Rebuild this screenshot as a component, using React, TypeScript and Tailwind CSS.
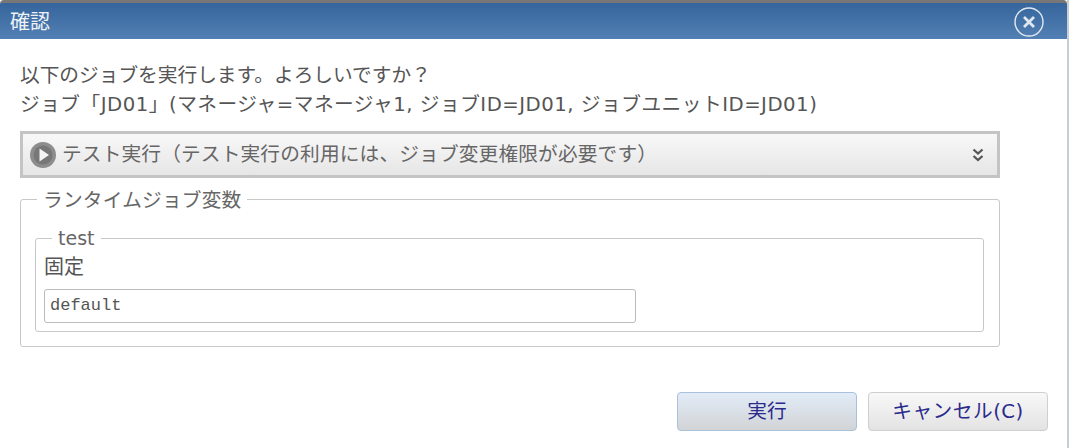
import React from "react";

export default function App() {
  return (
    <div className="w-[1069px] h-[448px] bg-white overflow-hidden font-['DejaVu_Sans','Noto_Sans_CJK_JP',sans-serif] text-[#555] border-r-2 border-[#c9ced3] flex flex-col">
      <div className="h-[39px] shrink-0 border-t-[3px] border-[#777] rounded-t-[4px] bg-gradient-to-b from-[#35659c] to-[#5380b4] flex items-center justify-between pl-[10px] pr-[23px]">
        <span className="text-[20px] leading-[24px] text-[#eef2f6] pt-[2px]">確認</span>
        <svg width="30" height="30" viewBox="0 0 30 30" fill="none" className="text-[#dfe7f0] mt-[1px]">
          <circle cx="15" cy="15" r="14" stroke="currentColor" strokeWidth="1.4" />
          <path d="M10 10L20 20M20 10L10 20" stroke="currentColor" strokeWidth="2.8" />
        </svg>
      </div>
      <div className="flex-1 flex flex-col pl-[20px] pr-[19px]">
        <div className="mt-[22px] text-[19.7px] leading-[29px] text-[#555]">
          <p>以下のジョブを実行します。よろしいですか？</p>
          <p className="tracking-[0.5px]">ジョブ「JD01」(マネージャ=マネージャ1, ジョブID=JD01, ジョブユニットID=JD01)</p>
        </div>
        <div className="mt-[12px] w-[980px] h-[47px] border-[3px] border-[#c4c4c4] bg-gradient-to-b from-[#f8f8f8] to-[#e6e6e6] flex items-center pl-[6px] pr-[13px]">
          <svg width="28" height="28" viewBox="0 0 28 28" className="shrink-0">
            <circle cx="14" cy="14" r="13" fill="#8d8d8d" />
            <circle cx="14" cy="14" r="9.5" fill="#777" />
            <path d="M10.5 7.5L20 14L10.5 20.5Z" fill="#f4f4f4" />
          </svg>
          <span className="ml-[5px] flex-1 text-[19.7px] tracking-[0.15px] text-[#666]">テスト実行（テスト実行の利用には、ジョブ変更権限が必要です）</span>
          <svg width="12" height="14" viewBox="0 0 12 14" fill="none" stroke="#555" strokeWidth="2.2">
            <path d="M1.5 1.5L6 5.5L10.5 1.5M1.5 8L6 12L10.5 8" />
          </svg>
        </div>
        <fieldset className="mt-[6px] w-[980px] h-[163px] border border-[#c8c8c8] rounded-[3px] pl-[14px] pr-[15px] pt-0 pb-[15px]">
          <legend className="ml-[2px] px-[6px] pt-[4px] text-[19.7px] tracking-[0.2px] leading-[26px] text-[#666]">ランタイムジョブ変数</legend>
          <fieldset className="mt-[14px] h-[104px] border border-[#c8c8c8] rounded-[3px] pl-[8px] pr-[8px]">
            <legend className="ml-[8px] px-[6px] text-[19px] leading-[20px] text-[#666]">test</legend>
            <div className="text-[20px] leading-[26px] text-[#555] mt-[6px]">固定</div>
            <div className="mt-[9px] w-[592px] h-[34px] border border-[#bbb] rounded-[3px] flex items-center pl-[5px] font-['Liberation_Mono',monospace] text-[17px] text-[#555]">default</div>
          </fieldset>
        </fieldset>
        <div className="mt-[45px] flex justify-end gap-[11px]">
          <button className="w-[180px] h-[39px] rounded-[4px] border border-[#a9c1dc] bg-gradient-to-b from-[#e2ecf8] to-[#d2d4d6] text-[#2a2a8c] text-[19.7px]">実行</button>
          <button className="w-[180px] h-[39px] rounded-[4px] border border-[#cfcfcf] bg-gradient-to-b from-[#f8f8f8] to-[#e3e3e3] text-[#2a2a8c] text-[19.7px] tracking-[0.5px]">キャンセル(C)</button>
        </div>
      </div>
    </div>
  );
}
